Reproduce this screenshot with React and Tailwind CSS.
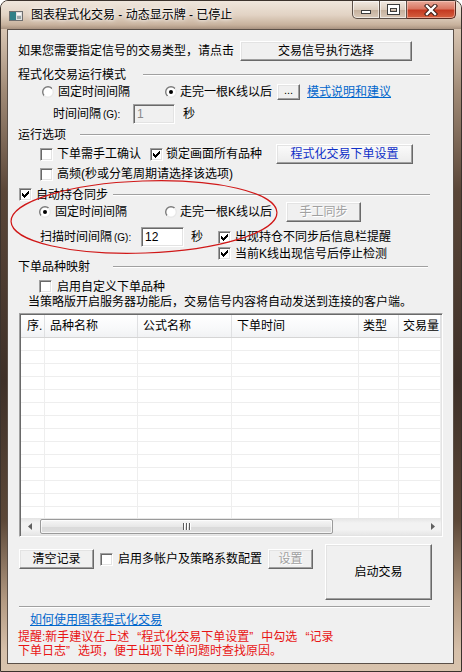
import React from 'react';

const Check = ({ on }) => (
  <span className="w-[13px] h-[13px] shrink-0 bg-white border border-t-[#a0a0a0] border-l-[#a0a0a0] border-r-white border-b-white shadow-[inset_1px_1px_0_#696969,inset_-1px_-1px_0_#e3e3e3] flex items-center justify-center">
    {on && (
      <svg width="7" height="7" viewBox="0 0 7 7" shapeRendering="crispEdges">
        <path d="M0 2h1v1h1v1h1v-1h1v-1h1v-1h1v-1h1v3h-1v1h-1v1h-1v1h-1v1h-1v-1h-1v-1h-1z" fill="#000" />
      </svg>
    )}
  </span>
);

const Radio = ({ on }) => (
  <svg width="12" height="12" viewBox="0 0 12 12" className="shrink-0">
    <defs>
      <linearGradient id="rg" x1="0" y1="0" x2="1" y2="1">
        <stop offset="0.5" stopColor="#7a7a7a" />
        <stop offset="0.5" stopColor="#e8e8e8" />
      </linearGradient>
    </defs>
    <circle cx="6" cy="6" r="5.3" fill="#fff" stroke="url(#rg)" strokeWidth="1.4" />
    {on && <circle cx="6" cy="6" r="2" fill="#000" />}
  </svg>
);

const Btn = ({ className, children }) => (
  <div className={`flex items-center justify-center shrink-0 bg-[#f0f0f0] border border-t-white border-l-white border-r-[#696969] border-b-[#696969] shadow-[inset_-1px_-1px_0_#a0a0a0,inset_1px_1px_0_#e3e3e3] ${className}`}>
    {children}
  </div>
);

const Etch = ({ className }) => (
  <div className={`flex-1 h-[2px] border-t border-t-[#a0a0a0] border-b border-b-white ${className}`} />
);

const Input = ({ className, children }) => (
  <div className={`flex items-center pl-[3px] shrink-0 border border-t-[#a0a0a0] border-l-[#a0a0a0] border-r-white border-b-white shadow-[inset_1px_1px_0_#696969,inset_-1px_-1px_0_#e3e3e3] ${className}`}>
    {children}
  </div>
);

// full-width curly quotes, as the dialog font draws them
const LQ = () => <span className="inline-block w-[12px] text-right">“</span>;
const RQ = () => <span className="inline-block w-[12px] text-left">”</span>;

const cols = [
  { w: 'w-[24px]', t: '序.', p: 'pl-[6px]' },
  { w: 'w-[93px]', t: '品种名称', p: 'pl-[5px]' },
  { w: 'w-[94px]', t: '公式名称', p: 'pl-[5px]' },
  { w: 'w-[127px]', t: '下单时间', p: 'pl-[5px]' },
  { w: 'w-[40px]', t: '类型', p: 'pl-[4px]' },
  { w: 'flex-1', t: '交易量', p: 'pl-[4px]' },
];

const TitleBar = () => (
  <div className="h-[28px] flex items-start bg-[linear-gradient(180deg,#efe6dc_0px,#e2d3c4_14px,#c7b19c_24px,#a89280_28px)]">
    <svg width="14" height="10" viewBox="0 0 14 10" className="ml-[8px] mt-[10px]">
      <rect x="0.5" y="0.5" width="13" height="9" fill="#e0e0e0" stroke="#6f6f6f" />
      <rect x="1" y="1" width="6" height="8" fill="#2f8088" />
      <rect x="8" y="2" width="4" height="2" fill="#fafafa" />
      <rect x="8" y="5" width="4" height="3" fill="#9aa7a8" />
    </svg>
    <span className="ml-[8px] mt-[6px] h-[16px] leading-[16px] text-[12px] text-black [text-shadow:0_0_6px_#fff,0_0_3px_#fff]">
      图表程式化交易 - 动态显示牌 - 已停止
    </span>
    <div className="ml-auto mr-[5px] flex">
      <div className="w-[28px] h-[18px] rounded-bl-[5px] border border-t-0 border-[#5d5048] bg-[linear-gradient(180deg,#f2eae2,#dccdbe_50%,#c4af9b_51%,#d9c9b9)] shadow-[inset_0_0_0_1px_rgba(255,255,255,0.6)] flex justify-center">
        <div className="mt-[9px] w-[10px] h-[4px] bg-white border border-[#3c3c3c]" />
      </div>
      <div className="w-[27px] h-[18px] border border-t-0 border-l-0 border-[#5d5048] bg-[linear-gradient(180deg,#f2eae2,#dccdbe_50%,#c4af9b_51%,#d9c9b9)] shadow-[inset_0_0_0_1px_rgba(255,255,255,0.6)] flex justify-center">
        <div className="mt-[4px] w-[11px] h-[9px] border-2 border-t-[3px] border-white shadow-[0_0_0_1px_#3c3c3c,inset_0_0_0_1px_#3c3c3c]" />
      </div>
      <div className="w-[49px] h-[18px] rounded-br-[5px] border border-t-0 border-l-0 border-[#5a2a20] bg-[linear-gradient(180deg,#e9a999,#d97762_45%,#c53a22_55%,#d5603f)] shadow-[inset_0_0_0_1px_rgba(255,220,210,0.5)] flex justify-center items-start">
        <svg width="14" height="12" viewBox="0 0 14 12" className="mt-[3px]">
          <path d="M3 2 L11 10 M11 2 L3 10" stroke="#3a1a14" strokeWidth="4.4" strokeLinecap="square" />
          <path d="M3 2 L11 10 M11 2 L3 10" stroke="#fff" strokeWidth="2.4" strokeLinecap="square" />
        </svg>
      </div>
    </div>
  </div>
);

export default function App() {
  return (
    <div className="w-[462px] h-[672px] relative rounded-t-[8px] border border-[#3b322c] overflow-hidden flex flex-col text-[12px] leading-[14px] text-black font-['Liberation_Sans','Noto_Sans_CJK_SC',sans-serif] bg-[linear-gradient(180deg,#eadfd3_0px,#d9c6b3_28px,#a08a76_90px,#5a4638_190px,#3e3028_380px,#5c4838_520px,#b39a82_600px,#d6c0aa_650px,#d9c4ae_672px)]">
      <TitleBar />

      <div className="ml-[6px] mr-[7px] h-[635px] border border-[#5b5048] bg-[#f0f0f0] flex flex-col">
        {/* signal type */}
        <div className="mt-[11px] h-[20px] flex items-center pl-[10px]">
          <span>如果您需要指定信号的交易类型，请点击</span>
          <Btn className="ml-[6px] w-[172px] h-[20px]">交易信号执行选择</Btn>
        </div>

        {/* run mode */}
        <div className="mt-[6px] h-[16px] flex items-center pl-[10px] pr-[23px]">
          <span>程式化交易运行模式</span>
          <Etch className="ml-[17px]" />
        </div>
        <div className="mt-[1px] h-[16px] flex items-center pl-[34px]">
          <Radio />
          <span className="ml-[4px]">固定时间间隔</span>
          <span className="ml-[35px]"><Radio on /></span>
          <span className="ml-[3px] w-[90px] whitespace-nowrap">走完一根K线以后</span>
          <Btn className="ml-[7px] w-[23px] h-[16px] text-[11px] leading-none pb-[3px]">...</Btn>
          <span className="ml-[7px] text-[#0066cc] underline">模式说明和建议</span>
        </div>
        <div className="mt-[4px] h-[20px] flex items-center pl-[45px]">
          <span className="w-[80px] whitespace-nowrap">时间间隔<span className="text-[10px] ml-[2px]">(G):</span></span>
          <Input className="w-[42px] h-[20px] bg-[#f0f0f0] text-[#8a8a8a]">1</Input>
          <span className="ml-[8px]">秒</span>
        </div>

        {/* run options */}
        <div className="mt-[3px] h-[16px] flex items-center pl-[10px] pr-[23px]">
          <span>运行选项</span>
          <Etch className="ml-[14px]" />
        </div>
        <div className="mt-[1px] h-[20px] flex items-center pl-[32px]">
          <Check />
          <span className="ml-[4px]">下单需手工确认</span>
          <span className="ml-[9px]"><Check on /></span>
          <span className="ml-[3px]">锁定画面所有品种</span>
          <Btn className="ml-[14px] w-[137px] h-[20px] text-[#1030c8] bg-[linear-gradient(180deg,#fbfbfb,#ebebeb)]">程式化交易下单设置</Btn>
        </div>
        <div className="mt-[2px] h-[16px] flex items-center pl-[32px]">
          <Check />
          <span className="ml-[4px]">高频(秒或分笔周期请选择该选项)</span>
        </div>

        {/* position sync */}
        <div className="mt-[5px] h-[15px] flex items-center pl-[11px] pr-[23px]">
          <Check on />
          <span className="ml-[4px]">自动持仓同步</span>
          <Etch className="ml-[5px]" />
        </div>
        <div className="h-[20px] flex items-center pl-[31px]">
          <Radio on />
          <span className="ml-[4px]">固定时间间隔</span>
          <span className="ml-[38px]"><Radio /></span>
          <span className="ml-[3px] w-[90px] whitespace-nowrap">走完一根K线以后</span>
          <Btn className="ml-[16px] w-[75px] h-[20px] text-[#a0a0a0] [text-shadow:1px_1px_0_#fff]">手工同步</Btn>
        </div>
        <div className="mt-[5px] h-[20px] flex items-center pl-[32px]">
          <span className="w-[101px] whitespace-nowrap">扫描时间间隔<span className="text-[10px] ml-[2px]">(G):</span></span>
          <Input className="w-[43px] h-[20px] bg-white">12</Input>
          <span className="ml-[7px]">秒</span>
          <span className="ml-[15px]"><Check on /></span>
          <span className="ml-[4px]">出现持仓不同步后信息栏提醒</span>
        </div>
        <div className="h-[13px] flex items-center pl-[210px]">
          <Check on />
          <span className="ml-[4px]">当前K线出现信号后停止检测</span>
        </div>

        {/* symbol mapping */}
        <div className="h-[14px] flex items-center pl-[10px] pr-[25px]">
          <span>下单品种映射</span>
          <Etch className="ml-[23px]" />
        </div>
        <div className="mt-[5px] h-[15px] flex items-center pl-[31px]">
          <Check />
          <span className="ml-[5px]">启用自定义下单品种</span>
        </div>
        <div className="mt-[1px] h-[14px] flex items-center pl-[20px] whitespace-nowrap">
          当策略版开启服务器功能后，交易信号内容将自动发送到连接的客户端。
        </div>

        {/* list view */}
        <div className="mt-[4px] ml-[11px] w-[424px] h-[224px] flex flex-col bg-white border border-t-[#a0a0a0] border-l-[#a0a0a0] border-r-white border-b-white shadow-[inset_1px_1px_0_#696969,inset_-1px_-1px_0_#e3e3e3] p-[1px]">
          <div className="h-[23px] flex bg-[linear-gradient(180deg,#ffffff,#f8f9fa_60%,#f1f2f4)] border-b border-[#d5d5d5]">
            {cols.map((c, i) => (
              <div key={i} className={`${c.w} ${c.p} shrink-0 flex items-center border-r border-[#dfe0e2] whitespace-nowrap overflow-hidden`}>
                {c.t}
              </div>
            ))}
          </div>
          <div className="flex-1 flex bg-[repeating-linear-gradient(180deg,#ffffff_0px,#ffffff_12px,#eeeeee_12px,#eeeeee_13px)]">
            {cols.map((c, i) => (
              <div key={i} className={`${c.w} shrink-0 border-r border-[#eeeeee]`} />
            ))}
          </div>
          <div className="h-[17px] flex items-center bg-[linear-gradient(180deg,#e4e4e4,#f2f2f2_30%,#f2f2f2_70%,#e6e6e6)]">
            <div className="w-[17px] h-full flex items-center justify-center">
              <svg width="4" height="7" viewBox="0 0 4 7"><path d="M4 0 L0 3.5 L4 7 Z" fill="#606060" /></svg>
            </div>
            <div className="ml-[2px] w-[293px] h-[15px] rounded-[2px] border border-[#9a9a9a] bg-[linear-gradient(180deg,#f6f6f6,#e8e8e8_50%,#d9d9d9_51%,#dedede)] shadow-[inset_0_0_0_1px_rgba(255,255,255,0.7)] flex items-center justify-center gap-[1px]">
              <div className="w-[1px] h-[7px] bg-[#5c5c5c] shadow-[1px_0_0_#fff]" />
              <div className="w-[1px] h-[7px] bg-[#5c5c5c] shadow-[1px_0_0_#fff] ml-[1px]" />
              <div className="w-[1px] h-[7px] bg-[#5c5c5c] shadow-[1px_0_0_#fff] ml-[1px]" />
            </div>
            <div className="flex-1" />
            <div className="w-[17px] h-full flex items-center justify-center">
              <svg width="4" height="7" viewBox="0 0 4 7"><path d="M0 0 L4 3.5 L0 7 Z" fill="#606060" /></svg>
            </div>
          </div>
        </div>

        {/* bottom controls */}
        <div className="mt-[7px] h-[56px] flex items-start pl-[11px]">
          <div className="mt-[5px] h-[20px] flex items-center">
            <Btn className="w-[75px] h-[20px]">清空记录</Btn>
            <span className="ml-[6px]"><Check /></span>
            <span className="ml-[5px] whitespace-nowrap">启用多帐户及策略系数配置</span>
            <Btn className="ml-[6px] w-[45px] h-[20px] text-[#a0a0a0] [text-shadow:1px_1px_0_#fff]">设置</Btn>
          </div>
          <Btn className="ml-[12px] w-[107px] h-[56px] border-r-[#404040] border-b-[#404040]">启动交易</Btn>
        </div>

        <div className="mt-[6px] ml-[11px] w-[411px] h-[2px] border-t border-t-[#a0a0a0] border-b border-b-white" />

        <div className="mt-[5px] h-[14px] flex items-center pl-[22px]">
          <span className="text-[#0066cc] underline">如何使用图表程式化交易</span>
        </div>

        <div className="mt-[3px] pl-[10px] text-[#e81414] whitespace-nowrap">
          <div className="h-[14px] leading-[14px]">提醒:新手建议在上述<LQ />程式化交易下单设置<RQ />中勾选<LQ />记录</div>
          <div className="h-[14px] leading-[14px]">下单日志<RQ />选项，便于出现下单问题时查找原因。</div>
        </div>
      </div>

      {/* hand-drawn annotation */}
      <svg className="absolute left-0 top-0 pointer-events-none" width="462" height="672" viewBox="0 0 462 672">
        <ellipse cx="143" cy="216" rx="133" ry="36" transform="rotate(-2 143 216)" fill="none" stroke="#d01818" strokeWidth="1.2" />
      </svg>
    </div>
  );
}
